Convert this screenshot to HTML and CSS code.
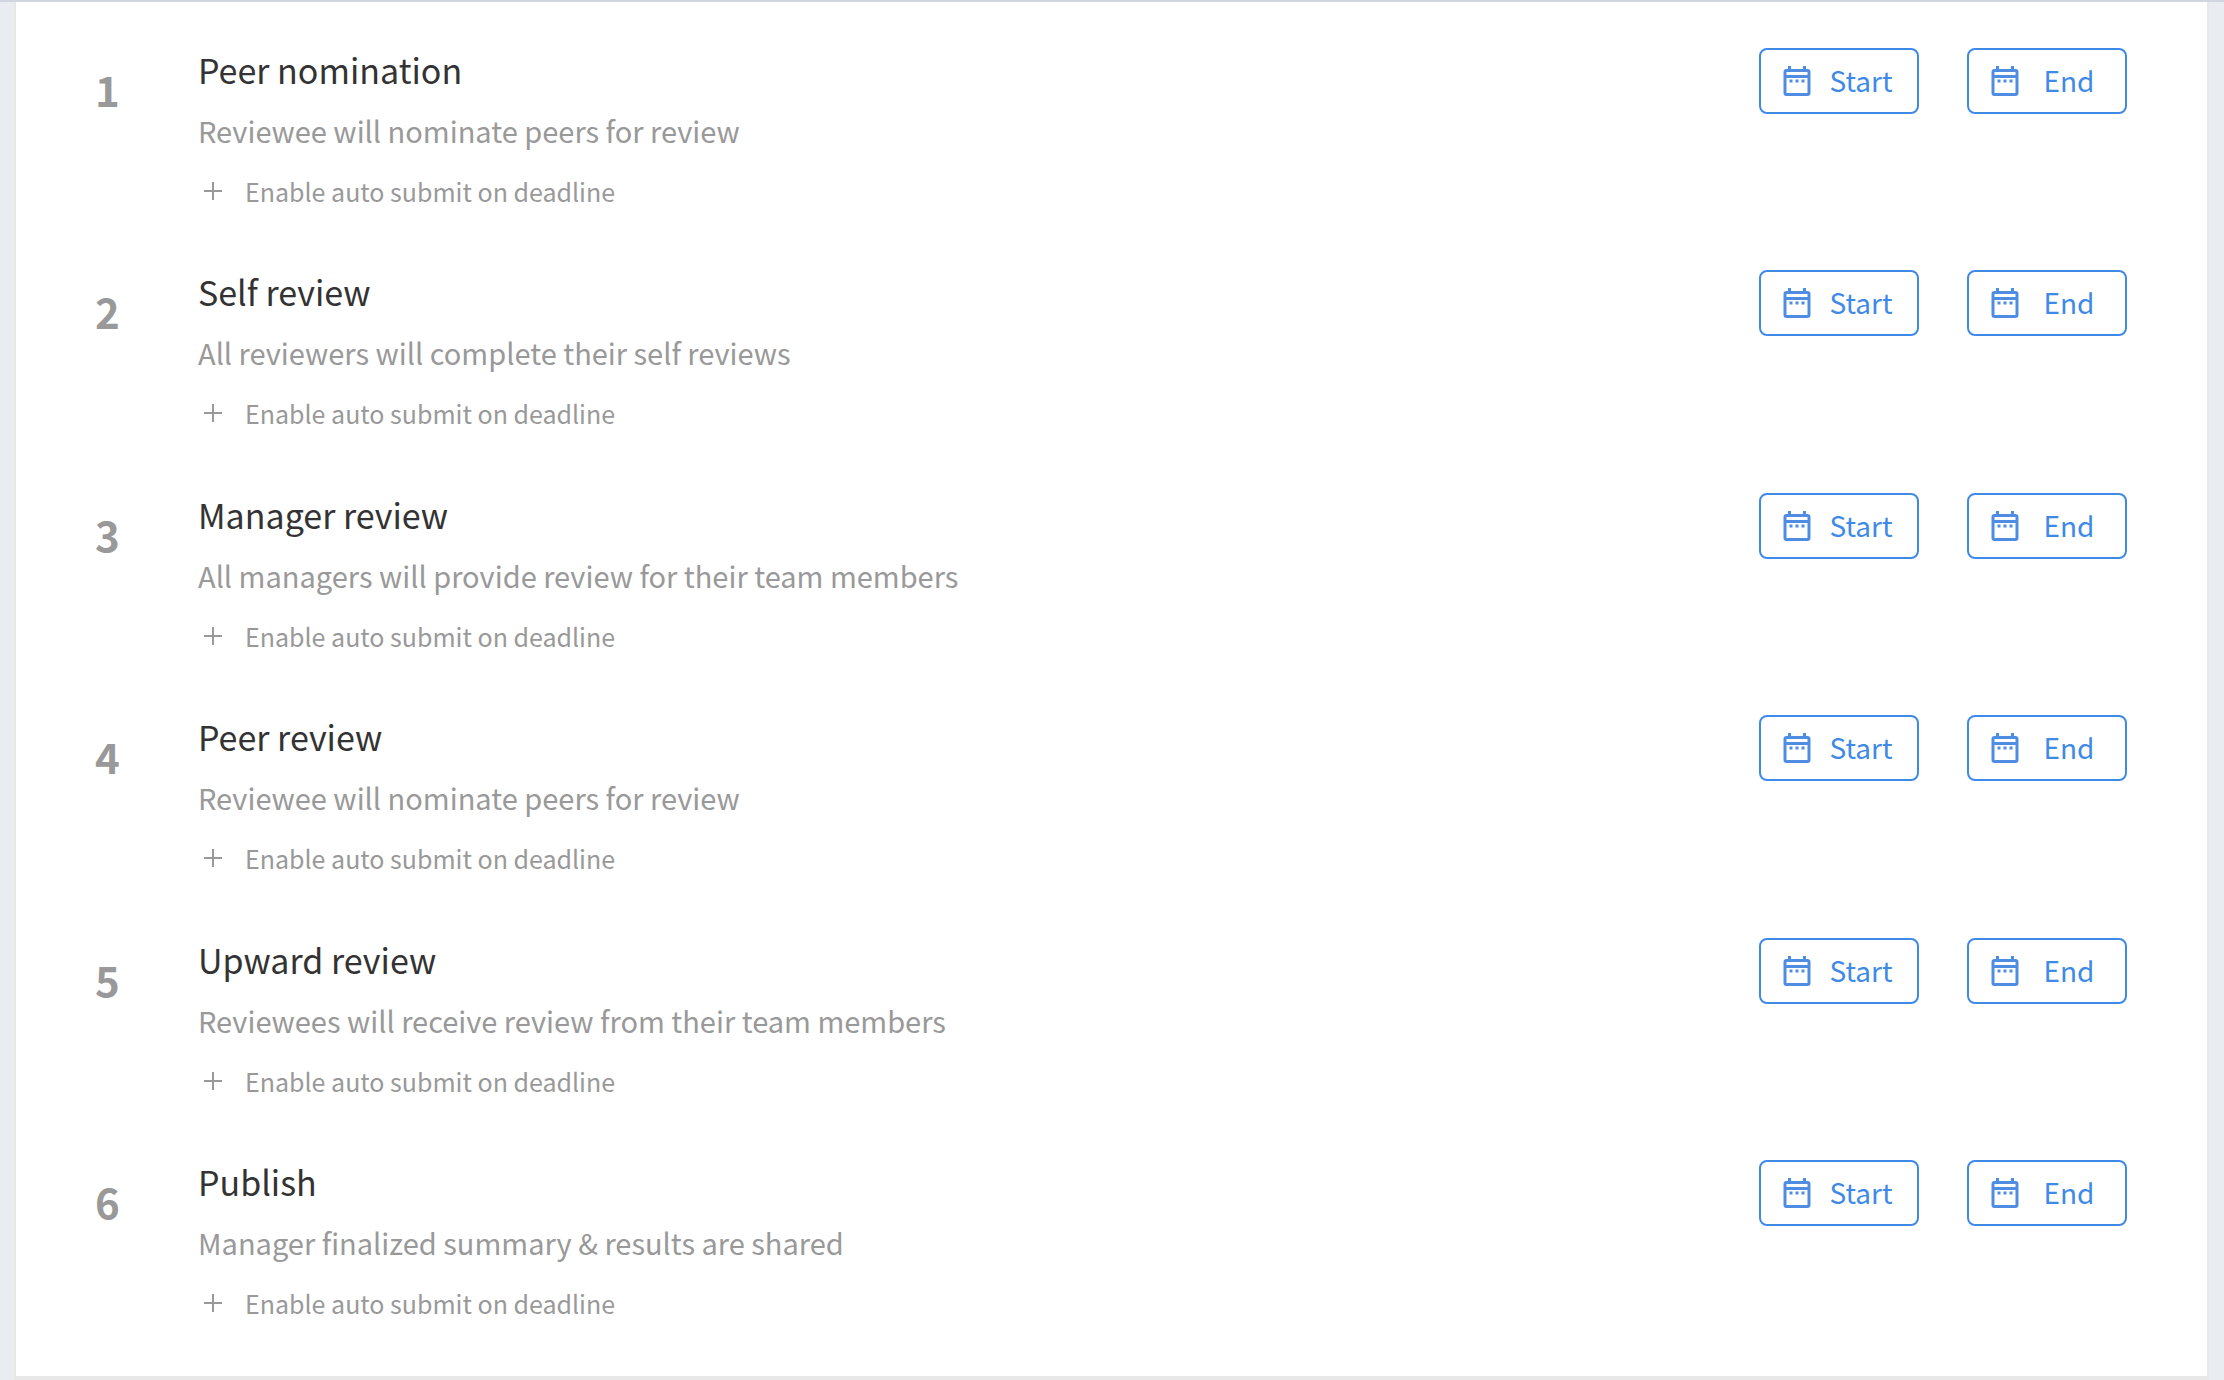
FILE: index.html
```html
<!DOCTYPE html>
<html lang="en">
<head>
<meta charset="utf-8">
<title>Review timeline</title>
<link rel="stylesheet" href="styles.css">
</head>

<body>
<svg class="sprite" aria-hidden="true">
    <symbol id="calendar" viewBox="0 0 24 24">
        <path fill-rule="evenodd" d="M6 2h2v2h8V2h2v2h1a2 2 0 0 1 2 2v14a2 2 0 0 1-2 2H5a2 2 0 0 1-2-2V6a2 2 0 0 1 2-2h1zM5 6v2h14V6zM5 10v10h14V10zM7 11h2v2H7zM11 11h2v2h-2zM15 11h2v2h-2z"/>
    </symbol>
    <symbol id="plus" viewBox="0 0 18 18">
        <path d="M8 0h2v8h8v2h-8v8H8v-8H0V8h8z"/>
    </symbol>
</svg>

<main class="panel">
<ol class="steps">
    <li class="step">
        <span class="number">1</span>
        <div class="info">
            <h2 class="title">Peer nomination</h2>
            <p class="desc">Reviewee will nominate peers for review</p>
            <button class="auto" type="button"><svg class="plus"><use href="#plus"/></svg>Enable auto submit on deadline</button>
        </div>
        <div class="dates">
            <button class="date" type="button"><svg class="cal"><use href="#calendar"/></svg><span class="label">Start</span></button>
            <button class="date" type="button"><svg class="cal"><use href="#calendar"/></svg><span class="label">End</span></button>
        </div>
    </li>
    <li class="step">
        <span class="number">2</span>
        <div class="info">
            <h2 class="title">Self review</h2>
            <p class="desc">All reviewers will complete their self reviews</p>
            <button class="auto" type="button"><svg class="plus"><use href="#plus"/></svg>Enable auto submit on deadline</button>
        </div>
        <div class="dates">
            <button class="date" type="button"><svg class="cal"><use href="#calendar"/></svg><span class="label">Start</span></button>
            <button class="date" type="button"><svg class="cal"><use href="#calendar"/></svg><span class="label">End</span></button>
        </div>
    </li>
    <li class="step">
        <span class="number">3</span>
        <div class="info">
            <h2 class="title">Manager review</h2>
            <p class="desc">All managers will provide review for their team members</p>
            <button class="auto" type="button"><svg class="plus"><use href="#plus"/></svg>Enable auto submit on deadline</button>
        </div>
        <div class="dates">
            <button class="date" type="button"><svg class="cal"><use href="#calendar"/></svg><span class="label">Start</span></button>
            <button class="date" type="button"><svg class="cal"><use href="#calendar"/></svg><span class="label">End</span></button>
        </div>
    </li>
    <li class="step">
        <span class="number">4</span>
        <div class="info">
            <h2 class="title">Peer review</h2>
            <p class="desc">Reviewee will nominate peers for review</p>
            <button class="auto" type="button"><svg class="plus"><use href="#plus"/></svg>Enable auto submit on deadline</button>
        </div>
        <div class="dates">
            <button class="date" type="button"><svg class="cal"><use href="#calendar"/></svg><span class="label">Start</span></button>
            <button class="date" type="button"><svg class="cal"><use href="#calendar"/></svg><span class="label">End</span></button>
        </div>
    </li>
    <li class="step">
        <span class="number">5</span>
        <div class="info">
            <h2 class="title">Upward review</h2>
            <p class="desc">Reviewees will receive review from their team members</p>
            <button class="auto" type="button"><svg class="plus"><use href="#plus"/></svg>Enable auto submit on deadline</button>
        </div>
        <div class="dates">
            <button class="date" type="button"><svg class="cal"><use href="#calendar"/></svg><span class="label">Start</span></button>
            <button class="date" type="button"><svg class="cal"><use href="#calendar"/></svg><span class="label">End</span></button>
        </div>
    </li>
    <li class="step">
        <span class="number">6</span>
        <div class="info">
            <h2 class="title">Publish</h2>
            <p class="desc">Manager finalized summary &amp; results are shared</p>
            <button class="auto" type="button"><svg class="plus"><use href="#plus"/></svg>Enable auto submit on deadline</button>
        </div>
        <div class="dates">
            <button class="date" type="button"><svg class="cal"><use href="#calendar"/></svg><span class="label">Start</span></button>
            <button class="date" type="button"><svg class="cal"><use href="#calendar"/></svg><span class="label">End</span></button>
        </div>
    </li>
</ol>
</main>
</body>
</html>
```

FILE: styles.css
```css
* {box-sizing: border-box;}
body {display: flex; min-height: 100vh; margin: 0; padding: 0 15px 0 14px; background-color: #e9edf2; border-top: 2px solid #d0d5df; font-family: "Noto Sans CJK SC", "Source Sans Pro", sans-serif; color: #999;}
button {font-family: inherit; background: none; cursor: pointer;}
.sprite {display: none;}

.panel {flex: 1; display: flex; background-color: #fff; border: 2px solid #e8e8e8; border-top: 0; border-bottom-width: 4px; padding: 44px 80px 53px 79px;}
.steps {flex: 1; list-style: none; margin: 0; padding: 0; display: flex; flex-direction: column; justify-content: space-between; gap: 40px;}
.step {display: flex; align-items: flex-start;}

.number {width: 103px; padding-top: 18px; font-size: 42px; font-weight: bold; line-height: 50px;}
.info {flex: 1;}
.title {margin: 0; font-size: 34px; font-weight: normal; line-height: 48px; color: #333;}
.desc {margin: 16px 0 0; font-size: 29px; line-height: 40px;}
.auto {display: flex; align-items: center; gap: 23px; margin-top: 20px; padding: 1px 0 0 6px; border: 0; font-size: 25px; line-height: 40px; color: #999;}
.plus {width: 18px; height: 18px; fill: #999;}

.dates {display: flex; gap: 48px; padding-top: 2px;}
.date {display: flex; align-items: center; width: 160px; height: 66px; padding: 0 10px 0 18px; border: 2px solid #3f8ae6; border-radius: 8px; font-size: 28px; line-height: 40px; color: #3f8ae6;}
.cal {width: 36px; height: 36px; fill: #4f8ce4;}
.label {flex: 1; padding-bottom: 2px; text-align: center;}
```
